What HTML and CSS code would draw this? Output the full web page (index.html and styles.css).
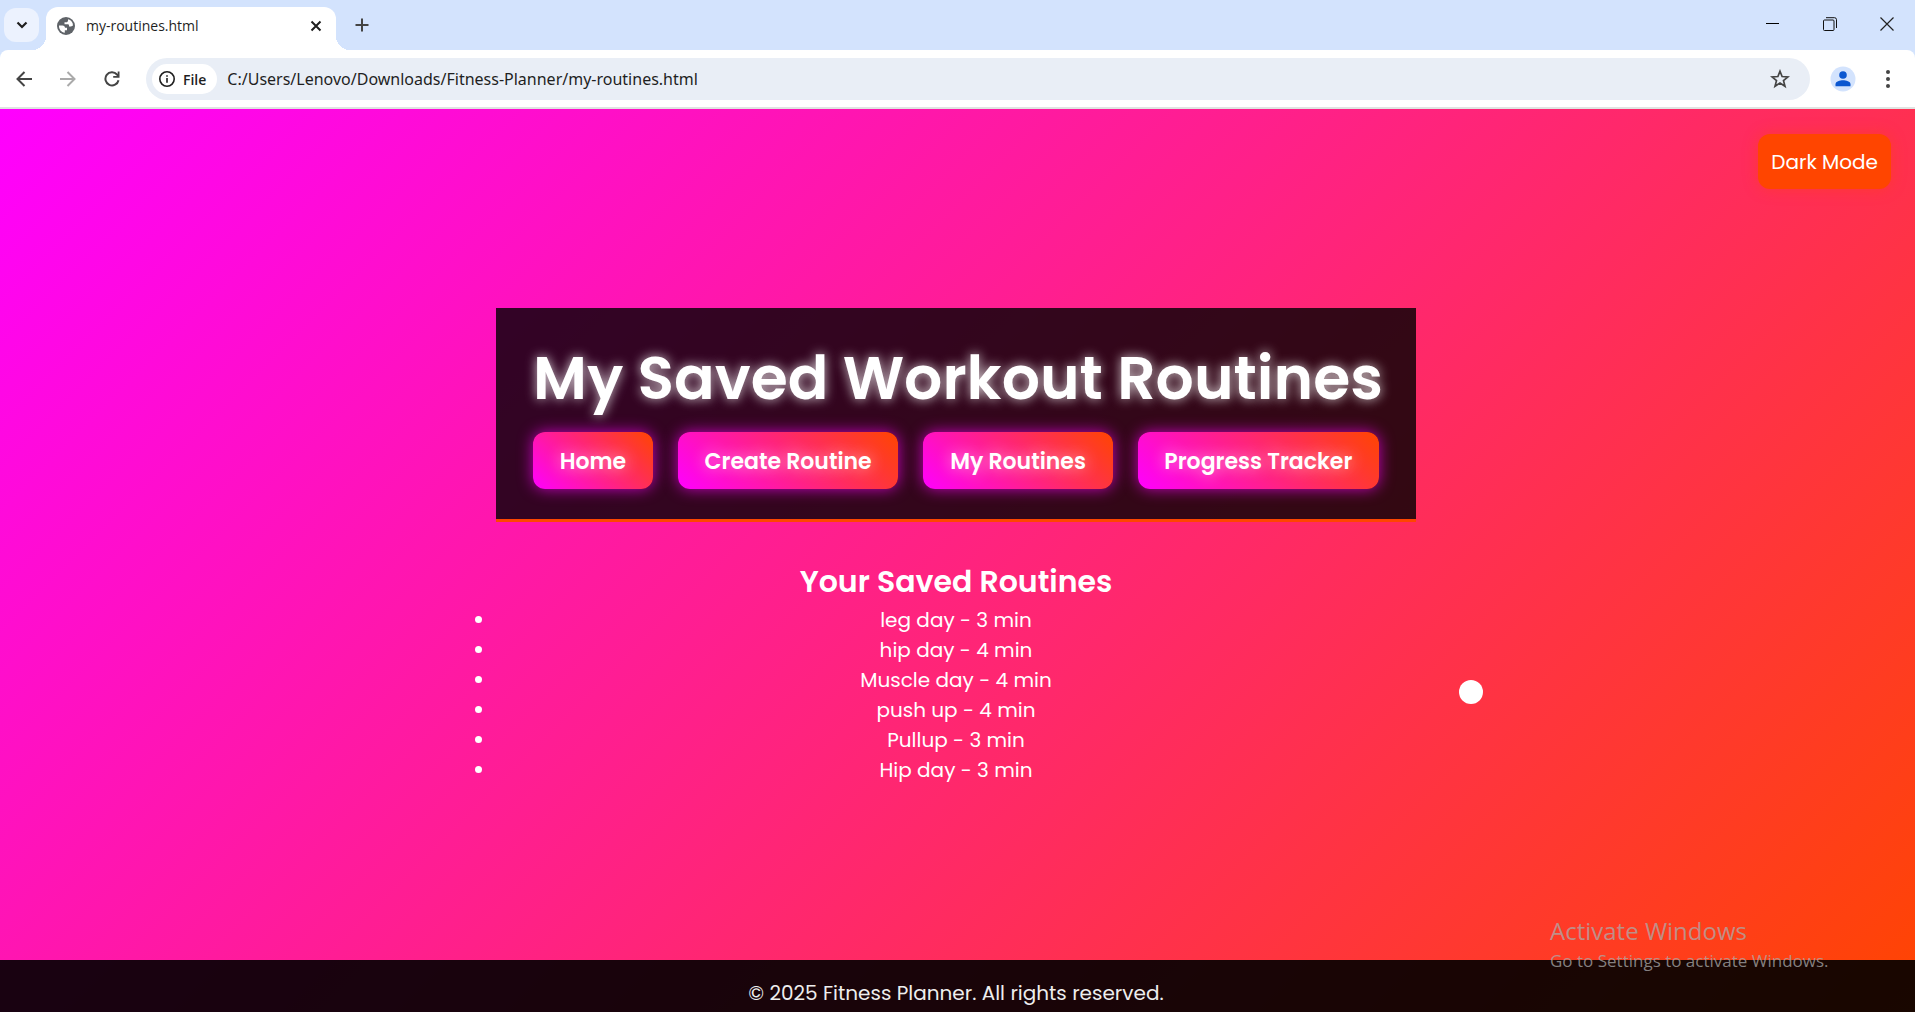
FILE: index.html
```html
<!DOCTYPE html>
<html lang="en">
<head>
<meta charset="utf-8">
<meta name="viewport" content="width=device-width, initial-scale=1">
<title>my-routines.html</title>
<link rel="stylesheet" href="styles.css">
</head>
<body>
<div class="browser">
  <div class="tabstrip">
    <button class="tab-search" aria-label="Search tabs"><svg width="12" height="8" viewBox="0 0 12 8"><path d="M1.5 1.5 6 6l4.500-4.500" fill="none" stroke="#1f1f1f" stroke-width="2.200"/></svg></button>
    <div class="tab">
      <svg width="18" height="18" viewBox="0 0 18 18"><circle cx="9" cy="9" r="9" fill="#5f6368"/><path d="M2 8.500h3.500c1.700 0 2.500 1 2.500 2.300h2v2.400H7.800v2.600C4.300 15.300 1.800 12.300 2 8.500zM11 2.300v1.200c0 1-.8 1.800-1.800 1.800H7.500v1.900h3.300c.8 0 1.200.6 1.200 1.300v1h2l2-1C16 5.500 14 3 11 2.300z" fill="#fff"/></svg>
      <span class="tab-title">my-routines.html</span>
      <button class="icon-btn" aria-label="Close tab"><svg width="12" height="12" viewBox="0 0 12 12"><path d="m1.500 1.500 9 9m0-9-9 9" stroke="#1f1f1f" stroke-width="2"/></svg></button>
    </div>
    <button class="icon-btn new-tab" aria-label="New tab"><svg width="14" height="14" viewBox="0 0 14 14"><path d="M7 .5v13M.5 7h13" stroke="#444" stroke-width="2"/></svg></button>
    <div class="window-controls">
      <button class="icon-btn" aria-label="Minimize"><svg width="14" height="14" viewBox="0 0 14 14"><path d="M0 6.500h13" stroke="#000"/></svg></button>
      <button class="icon-btn" aria-label="Restore"><svg width="14" height="14" viewBox="0 0 14 14" fill="none" stroke="#111"><rect x=".5" y="3" width="10.500" height="10.500" rx="1"/><path d="M3 .7h8.500a2 2 0 0 1 2 2V11"/></svg></button>
      <button class="icon-btn" aria-label="Close"><svg width="14" height="14" viewBox="0 0 14 14"><path d="m.5.500 13 13m0-13-13 13" stroke="#222" stroke-width="1.200"/></svg></button>
    </div>
  </div>
  <div class="toolbar">
    <button class="icon-btn" aria-label="Back"><svg width="16" height="16" viewBox="0 0 16 16"><path d="M16 8H2M8.500 1 1.500 8l7 7" fill="none" stroke="#444" stroke-width="2"/></svg></button>
    <button class="icon-btn" aria-label="Forward"><svg width="16" height="16" viewBox="0 0 16 16"><path d="M0 8h14M7.500 1l7 7-7 7" fill="none" stroke="#aaa" stroke-width="2"/></svg></button>
    <button class="icon-btn" aria-label="Reload"><svg width="16" height="16" viewBox="0 0 16 16"><path d="M14.500 9.200A6.600 6.600 0 1 1 13 3.500L14.500 5" fill="none" stroke="#444" stroke-width="2"/><path d="M15.500.5v6.300H9.200V5h4.500V.5z" fill="#444"/></svg></button>
    <div class="omnibox">
      <button class="file-chip"><svg width="16" height="16" viewBox="0 0 16 16"><circle cx="8" cy="8" r="7.200" fill="none" stroke="#1f1f1f" stroke-width="1.600"/><path d="M7.200 7h1.600v4.700H7.200zM7.200 4.200h1.600v1.600H7.200z" fill="#1f1f1f"/></svg>File</button>
      <input class="url" type="text" aria-label="Address" value="C:/Users/Lenovo/Downloads/Fitness-Planner/my-routines.html">
      <button class="icon-btn" aria-label="Bookmark"><svg width="20" height="20" viewBox="0 0 20 20"><path d="m10 2.200 2.100 5.300 5.900.4-4.500 3.700 1.500 5.700-5-3.200-5 3.200 1.500-5.700L2 7.900l5.900-.4z" fill="none" stroke="#444" stroke-width="1.700"/></svg></button>
    </div>
    <button class="icon-btn profile" aria-label="Profile"><svg width="26" height="26" viewBox="0 0 26 26"><circle cx="13" cy="13" r="12.500" fill="#d3e3fd"/><circle cx="13" cy="9" r="3.800" fill="#0b57d0"/><path d="M5.500 20.300v-2c0-3 4.500-4 7.500-4s7.500 1 7.500 4v2z" fill="#0b57d0"/></svg></button>
    <button class="icon-btn" aria-label="Menu"><svg width="4" height="18" viewBox="0 0 4 18" fill="#444"><circle cx="2" cy="2" r="2"/><circle cx="2" cy="9" r="2"/><circle cx="2" cy="16" r="2"/></svg></button>
  </div>
  <div class="page">
    <button class="mode-toggle">Dark Mode</button>
    <main class="content">
      <header class="hero">
        <h1>My Saved Workout Routines</h1>
        <nav class="nav">
          <a href="#home">Home</a>
          <a href="#create">Create Routine</a>
          <a href="#routines">My Routines</a>
          <a href="#progress">Progress Tracker</a>
        </nav>
      </header>
      <section class="routines">
        <h2>Your Saved Routines</h2>
        <ul>
          <li>leg day - 3 min</li>
          <li>hip day - 4 min</li>
          <li>Muscle day - 4 min</li>
          <li>push up - 4 min</li>
          <li>Pullup - 3 min</li>
          <li>Hip day - 3 min</li>
        </ul>
      </section>
    </main>
    <footer class="footer">© 2025 Fitness Planner. All rights reserved.</footer>
    <div class="cursor-dot"></div>
  </div>
</div>
<div class="watermark">
  <p class="watermark-title">Activate Windows</p>
  <p>Go to Settings to activate Windows.</p>
</div>
</body>
</html>
```
FILE: styles.css
```css
* { box-sizing: border-box; margin: 0; padding: 0; }

body {
  font-family: Poppins, Inter, sans-serif;
  overflow: hidden;
}

button { border: 0; background: none; font: inherit; color: inherit; cursor: pointer; }
svg { display: block; flex: none; }

.browser { display: flex; flex-direction: column; height: 100vh; background: #d3e3fd; }

/* Tab strip */
.tabstrip {
  display: flex;
  flex: none;
  align-items: flex-end;
  height: 50px;
  padding-left: 4px;
  font-family: "Segoe UI", "Open Sans", sans-serif;
}
.tab-search {
  display: grid;
  place-items: center;
  width: 35px;
  height: 34px;
  margin-bottom: 8px;
  border-radius: 12px;
  background: #ecf2fe;
}
.tab {
  position: relative;
  display: flex;
  align-items: center;
  gap: 11px;
  width: 290px;
  height: 43px;
  margin-left: 7px;
  padding: 0 8px 6px 11px;
  border-radius: 12px 12px 0 0;
  background: #fff;
  color: #1f1f1f;
  font-size: 14px;
}
.tab::before,
.tab::after {
  content: "";
  position: absolute;
  bottom: 0;
  width: 14px;
  height: 14px;
}
.tab::before { right: 100%; background: radial-gradient(circle at 0 0, transparent 14px, #fff 14px); }
.tab::after { left: 100%; background: radial-gradient(circle at 100% 0, transparent 14px, #fff 14px); }
.tab-title { flex: 1; }
.icon-btn { display: grid; flex: none; place-items: center; width: 24px; height: 24px; }
.new-tab { margin: 0 0 13px 14px; }
.window-controls { display: flex; gap: 33px; margin: 0 16px 14px auto; }

/* Toolbar */
.toolbar {
  display: flex;
  flex: none;
  align-items: center;
  gap: 20px;
  height: 59px;
  padding: 1px 15px 0 12px;
  border-bottom: 2px solid #e0e3e1;
  border-radius: 8px 8px 0 0;
  background: #fff;
  font-family: "Segoe UI", "Open Sans", sans-serif;
}
.omnibox {
  display: flex;
  flex: 1;
  align-items: center;
  gap: 10px;
  height: 42px;
  margin-left: 2px;
  padding: 0 18px 0 6px;
  border-radius: 21px;
  background: #e9eef6;
}
.file-chip {
  display: flex;
  align-items: center;
  gap: 8px;
  height: 30px;
  padding: 0 11px 0 7px;
  border-radius: 15px;
  background: #fff;
  color: #1f1f1f;
  font-size: 14px;
  font-weight: 600;
}
.url {
  flex: 1;
  min-width: 0;
  border: 0;
  outline: 0;
  background: none;
  color: #1f1f1f;
  font-family: "Segoe UI", "Noto Sans", sans-serif;
  font-size: 16px;
}
.profile { width: 26px; height: 26px; }

/* Page */
.page {
  position: relative;
  display: flex;
  flex: 1;
  flex-direction: column;
  min-height: 0;
  background: linear-gradient(135deg, #ff00ff, #ff4500);
  color: #fff;
}
.mode-toggle {
  position: absolute;
  top: 25px;
  right: 24px;
  padding: 13px 13px 11px;
  border-radius: 12px;
  background: #ff4500;
  box-shadow: 0 0 15px rgba(255, 69, 0, 0.4);
  font-size: 20px;
  line-height: 31px;
}
.content {
  display: flex;
  flex: 1;
  flex-direction: column;
  align-items: center;
  justify-content: center;
  padding: 24px 3px 0 0;
}
.hero {
  width: 920px;
  max-width: 100%;
  padding: 25px 37px 30px;
  border-bottom: 3px solid #ff4500;
  background: rgba(0, 0, 0, 0.8);
  text-align: center;
}
h1 {
  font-size: 60px;
  font-weight: 600;
  line-height: 90px;
  text-shadow: 0 0 12px rgba(255, 255, 255, 0.8);
  white-space: nowrap;
}
.nav { display: flex; gap: 25px; margin-top: 9px; }
.nav a {
  flex: 1 1 auto;
  padding: 13px 20px 11px;
  border-radius: 12px;
  background: linear-gradient(45deg, #ff00ff, #ff4500);
  box-shadow: 0 0 15px rgba(255, 0, 255, 0.7);
  color: #fff;
  font-size: 22px;
  font-weight: 600;
  line-height: 33px;
  text-decoration: none;
  text-shadow: 0 0 15px rgba(255, 255, 255, 0.6);
  white-space: nowrap;
}
.routines { width: 920px; max-width: 100%; padding-top: 37px; text-align: center; }
h2 { font-size: 30px; font-weight: 600; line-height: 46px; }
li { font-size: 20px; line-height: 30px; }
.footer {
  height: 52px;
  padding: 18px 3px 0 0;
  background: rgba(0, 0, 0, 0.9);
  color: #eee;
  font-size: 20px;
  line-height: 30px;
  text-align: center;
}
.cursor-dot {
  position: absolute;
  top: 571px;
  left: 1459px;
  width: 24px;
  height: 24px;
  border-radius: 50%;
  background: #fff;
}

/* System watermark */
.watermark {
  position: absolute;
  right: 80px;
  bottom: 38px;
  width: 285px;
  color: rgba(170, 170, 170, 0.75);
  font-family: "Segoe UI", "Open Sans", sans-serif;
  font-size: 17px;
  line-height: 26px;
  white-space: nowrap;
}
.watermark-title { font-size: 24px; line-height: 34px; }
```
